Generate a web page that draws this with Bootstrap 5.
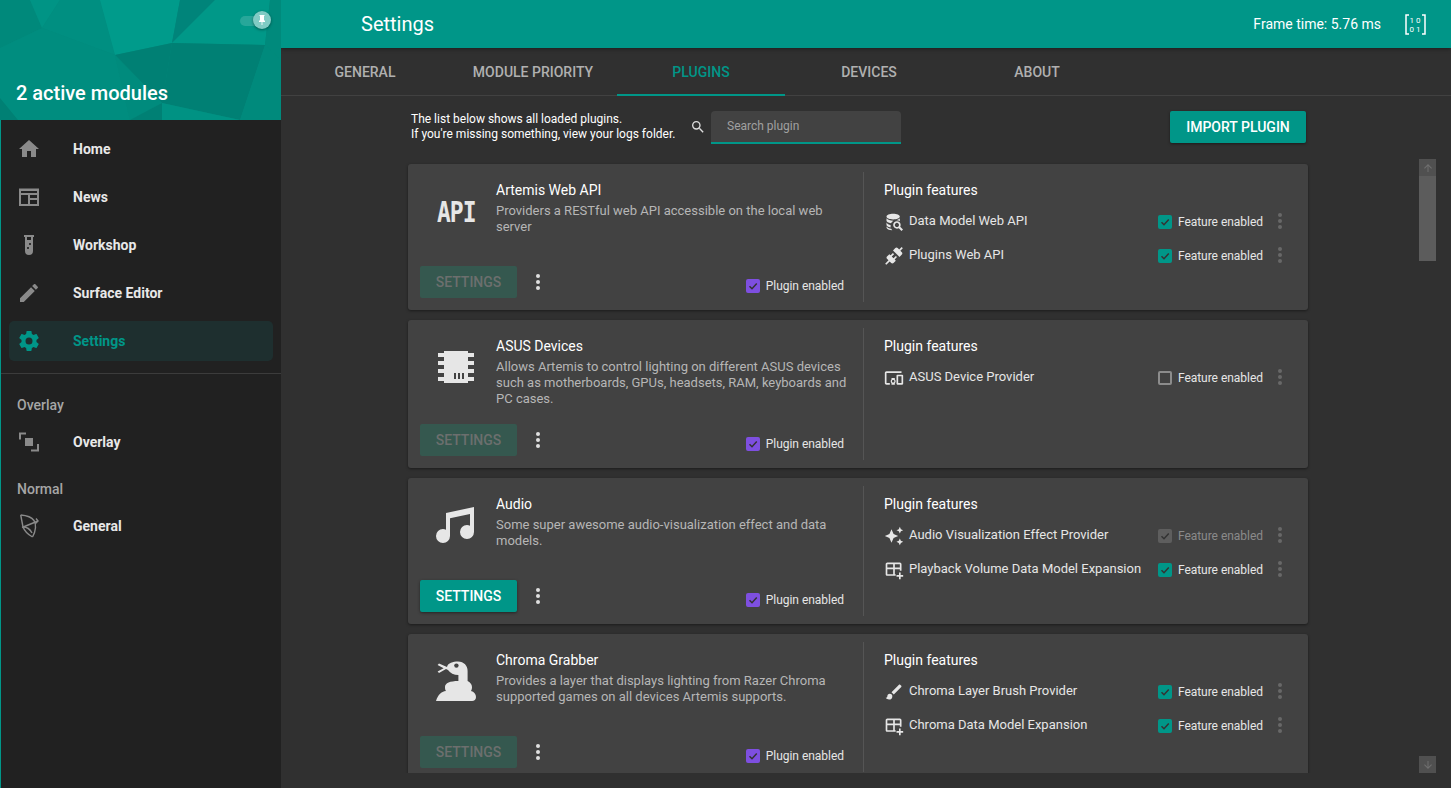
<!DOCTYPE html>
<html lang="en">
<head>
  <meta charset="UTF-8">
  <meta name="viewport" content="width=device-width, initial-scale=1.0">
  <title>Artemis Settings</title>
  <link href="https://cdn.jsdelivr.net/npm/bootstrap@5.3.3/dist/css/bootstrap.min.css" rel="stylesheet">
  <style>
    html, body { height: 100%; overflow: hidden; }
    body { background: #303030; color: #fff; font-family: Roboto, "Liberation Sans", sans-serif; font-size: 13px; }
    .app-shell { height: 788px; }
    .side { width: 281px; flex: none; background: #212121; border-left: 1px solid #009688; }
    .side-head { height: 120px; margin-left: -1px; width: 281px; }
    .side-head svg.poly { width: 100%; height: 100%; display: block; }
    .side-title { left: 16px; top: 80px; font-size: 20px; font-weight: 500; line-height: 26px; }
    .pin-track { left: 240px; top: 16px; width: 20px; height: 10px; border-radius: 5px; background: rgba(128,203,196,.3); }
    .pin-thumb { left: 253px; top: 11px; width: 18px; height: 18px; border-radius: 50%; background: #80cbc4; box-shadow: 0 1px 3px rgba(0,0,0,.4); }
    .pin-thumb svg { width: 12px; height: 12px; fill: #fff; }
    .side-nav { padding: 9px 8px 0; }
    .side-link { height: 40px; margin-bottom: 8px; padding: 0 8px; border-radius: 5px; color: #e8e8e8; font-weight: 700; font-size: 14px; }
    .side-link svg { width: 24px; height: 24px; fill: #8a8a8a; margin-right: 32px; flex: none; }
    .side-link.on { background: #1e2f2f; color: #009688; }
    .side-link.on svg { fill: #009688; }
    .side-rule { border-top: 1px solid #3c3c3c; margin-top: 4px; }
    .side-label { color: #a6a6a6; font-weight: 500; font-size: 14px; line-height: 20px; padding-left: 16px; margin-top: 21px; margin-bottom: 7px; }
    .side-label.next { margin-top: 17px; }
    .side-nav.low { padding-top: 0; }
    .main-col { min-width: 0; }
    .top-bar { height: 48px; background: #009688; box-shadow: 0 1px 4px rgba(0,0,0,.4); padding-left: 80px; padding-right: 25px; }
    .top-title { font-size: 20px; }
    .frame-time { font-size: 14px; margin-right: 24px; }
    .matrix { width: 21px; height: 21px; display: block; }
    .tab-bar { height: 48px; border-bottom: 1px solid #414141; }
    .tab-item { width: 168px; height: 48px; padding: 1px 0 0; color: #b0b0b0; font-size: 14px; font-weight: 500; }
    .tab-item:hover { color: #b0b0b0; }
    .tab-item.on { color: #009688; border-bottom: 2px solid #009688; padding-top: 3px; }
    .body-area { height: 677px; overflow: hidden; }
    .page-width { width: 900px; margin-left: 127px; }
    .tool-row { padding-top: 15px; height: 68px; }
    .tool-note { font-size: 12px; line-height: 15px; width: 282px; padding-left: 3px; padding-top: 1px; }
    .tool-glass { width: 16px; height: 16px; fill: #ddd; margin-right: 5px; margin-top: 8px; }
    .find-box { width: 190px; height: 33px; background: #424242; border: 0; border-bottom: 2px solid #009688; border-radius: 4px 4px 0 0; padding: 0 16px 2px; font-size: 12px; color: #fff; }
    .find-box::placeholder { color: #a0a0a0; opacity: 1; }
    .find-box:focus { background: #424242; color: #fff; box-shadow: none; border-color: #009688; }
    .btn-teal, .btn-teal:hover { background: #009688; color: #fff; border: 0; border-radius: 2px; font-size: 14px; font-weight: 500; height: 32px; padding: 0; box-shadow: 0 1px 3px rgba(0,0,0,.45); }
    .btn-teal.btn-import { width: 136px; margin-right: 2px; }
    .btn-teal.btn-cfg { width: 97px; }
    .btn-teal.btn-cfg:disabled { background: #35584f; color: #6c6f6e; opacity: 1; box-shadow: none; }
    .plug-card { background: #424242; border: 0; border-radius: 3px; margin-bottom: 10px; padding: 8px 0; box-shadow: 0 1px 3px rgba(0,0,0,.45); flex-direction: row; }
    .plug-left { width: 456px; flex: none; border-right: 1px solid #555; padding: 0 15px 4px 12px; }
    .plug-top { display: flex; min-height: 94px; padding-top: 8px; padding-bottom: 17px; }
    .plug-icon { width: 76px; flex: none; padding-top: 7px; padding-left: 12px; }
    .plug-icon svg { width: 48px; height: 48px; fill: #e6e6e6; display: block; }
    .api-mark { font-family: "DejaVu Sans Mono", monospace; font-weight: 700; font-size: 23px; line-height: 32px; letter-spacing: -1px; color: #e6e6e6; padding-left: 5px; padding-top: 9px; display: block; transform: scaleY(1.2); }
    .plug-name { font-size: 14px; line-height: 20px; margin-bottom: 3px; color: #fff; }
    .plug-desc { font-size: 13px; line-height: 16px; color: #b6b6b6; }
    .dots { width: 16px; height: 24px; fill: #e0e0e0; flex: none; }
    .dots.dim { fill: #686868; }
    .dots.lead { margin-left: 13px; }
    .check-line { font-size: 12px; line-height: 14px; color: #e6e6e6; letter-spacing: -.03px; }
    .check-line.off { color: #8a8a8a; }
    .plug-check { margin-right: 4px; margin-top: 7px; }
    .form-check-input.tick { width: 14px; height: 14px; margin: 0 6px 0 0; border-radius: 2px; background-color: transparent; border: 2px solid #8c8c8c; flex: none; opacity: 1; }
    .form-check-input.tick:checked { background-color: #009688; border-color: #009688; background-size: 12px; background-image: url("data:image/svg+xml,%3Csvg xmlns='http://www.w3.org/2000/svg' viewBox='0 0 24 24'%3E%3Cpath fill='none' stroke='%23333' stroke-width='3' d='M5 12.5l5 5L19.5 7'/%3E%3C/svg%3E"); }
    .form-check-input.tick.violet:checked { background-color: #7e4fe0; border-color: #7e4fe0; }
    .form-check-input.tick:disabled { opacity: 1; }
    .form-check-input.tick.greyed:checked { background-color: #5e5e5e; border-color: #5e5e5e; }
    .plug-right { padding: 8px 20px 0; min-width: 0; }
    .feat-head { font-size: 14px; line-height: 20px; margin-bottom: 4px; color: #fff; }
    .feat-row { height: 34px; }
    .feat-icon { width: 20px; height: 20px; fill: #e6e6e6; margin-right: 5px; flex: none; margin-top: 2px; }
    .feat-name { font-size: 13px; color: #e6e6e6; margin-top: -1px; }
    .feat-check { margin-top: 1px; }
    .feat-end { margin-left: 9px; margin-right: 0; }
    .scroll-rail { left: 1138px; top: 63px; width: 17px; height: 102px; background: #5c5c5c; }
    .scroll-cap { width: 17px; height: 17px; background: #505050; }
    .scroll-cap svg { width: 12px; height: 12px; fill: #6f6f6f; }
    .scroll-down { left: 1138px; top: 660px; }
  </style>
</head>
<body>

<svg width="0" height="0" class="position-absolute">
  <symbol id="i-home" viewBox="0 0 24 24"><path d="M10,20V14H14V20H19V12H22L12,3L2,12H5V20H10Z"/></symbol>
  <symbol id="i-news" viewBox="0 0 24 24"><path fill-rule="evenodd" d="M2 3l1 1 1-1 1 1 1-1 1 1 1-1 1 1 1-1 1 1 1-1 1 1 1-1 1 1 1-1 1 1 1-1 1 1 1-1 1 1 1-1V21H2ZM4 6V8H20V6ZM4 10V19H11V10ZM13 10V13H20V10ZM13 15V19H20V15Z"/></symbol>
  <symbol id="i-tube" viewBox="0 0 24 24"><path d="M7,2V4H8V18A4,4 0 0,0 12,22A4,4 0 0,0 16,18V4H17V2H7M11,16C10.4,16 10,15.6 10,15C10,14.4 10.4,14 11,14C11.6,14 12,14.4 12,15C12,15.6 11.6,16 11,16M13,12C12.4,12 12,11.6 12,11C12,10.4 12.4,10 13,10C13.6,10 14,10.4 14,11C14,11.6 13.6,12 13,12M14,7H10V4H14V7Z"/></symbol>
  <symbol id="i-pencil" viewBox="0 0 24 24"><path d="M20.71,7.04C21.1,6.65 21.1,6 20.71,5.63L18.37,3.29C18,2.9 17.35,2.9 16.96,3.29L15.12,5.12L18.87,8.87M3,17.25V21H6.75L17.81,9.93L14.06,6.18L3,17.25Z"/></symbol>
  <symbol id="i-cog" viewBox="0 0 24 24"><path d="M12,15.5A3.5,3.5 0 0,1 8.5,12A3.5,3.5 0 0,1 12,8.5A3.5,3.5 0 0,1 15.5,12A3.5,3.5 0 0,1 12,15.5M19.43,12.97C19.47,12.65 19.5,12.33 19.5,12C19.5,11.67 19.47,11.34 19.43,11L21.54,9.37C21.73,9.22 21.78,8.95 21.66,8.73L19.66,5.27C19.54,5.05 19.27,4.96 19.05,5.05L16.56,6.05C16.04,5.66 15.5,5.32 14.87,5.07L14.5,2.42C14.46,2.18 14.25,2 14,2H10C9.75,2 9.54,2.18 9.5,2.42L9.13,5.07C8.5,5.32 7.96,5.66 7.44,6.05L4.95,5.05C4.73,4.96 4.46,5.05 4.34,5.27L2.34,8.73C2.21,8.95 2.27,9.22 2.46,9.37L4.57,11C4.53,11.34 4.5,11.67 4.5,12C4.5,12.33 4.53,12.65 4.57,12.97L2.46,14.63C2.27,14.78 2.21,15.05 2.34,15.27L4.34,18.73C4.46,18.95 4.73,19.03 4.95,18.95L7.44,17.94C7.96,18.34 8.5,18.68 9.13,18.93L9.5,21.58C9.54,21.82 9.75,22 10,22H14C14.25,22 14.46,21.82 14.5,21.58L14.87,18.93C15.5,18.67 16.04,18.34 16.56,17.94L19.05,18.95C19.27,19.03 19.54,18.95 19.66,18.73L21.66,15.27C21.78,15.05 21.73,14.78 21.54,14.63L19.43,12.97Z"/></symbol>
  <symbol id="i-overlay" viewBox="0 0 24 24"><path d="M2 2.5H9V4.5H4V9.5H2ZM22 21.5H14V19.5H20V14H22ZM8 8H16V16H8Z"/></symbol>
  <symbol id="i-bow" viewBox="0 0 24 24"><g fill="none" stroke="#8a8a8a" stroke-width="1.4"><path d="M3.7 1C10 1.5 14.5 3 17 6.5C19.5 10 19 17 15.5 23"/><path d="M3.7 1L6 13C7.5 17 11 20.5 15.5 23"/><path d="M5 13.5L21 7"/><path d="M19 4.5L21 7L18.5 9.5"/><path d="M6 13C9 13 13 15 15 19"/></g></symbol>
  <symbol id="i-chip" viewBox="0 0 24 24"><path d="M6,4H18V5H21V7H18V9H21V11H18V13H21V15H18V17H21V19H18V20H6V19H3V17H6V15H3V13H6V11H3V9H6V7H3V5H6V4M11,15V18H12V15H11M13,15V18H14V15H13M15,15V18H16V15H15Z"/></symbol>
  <symbol id="i-music" viewBox="0 0 24 24"><path d="M21,3V15.5A3.5,3.5 0 0,1 17.5,19A3.5,3.5 0 0,1 14,15.5A3.5,3.5 0 0,1 17.5,12C18.04,12 18.55,12.12 19,12.34V6.47L9,8.6V17.5A3.5,3.5 0 0,1 5.5,21A3.5,3.5 0 0,1 2,17.5A3.5,3.5 0 0,1 5.5,14C6.04,14 6.55,14.12 7,14.34V6L21,3Z"/></symbol>
  <symbol id="i-snake" viewBox="0 0 24 24"><path d="M7.5 5C8 3 10.5 2.3 13 2.3C16 2.3 17.8 4.5 17.8 7V12C19 12.5 20 13.7 20 15C20 15.6 19.9 16.3 19.5 17C21 17.3 22 18.6 22 20C22 21.2 21.2 22 20 22H2C3 19 4.5 17.3 7 17C6.6 16.5 6.5 15.8 6.5 15C6.5 13 9 12 13.2 12V9C11 9 9 8 8 6.5L7 6L3.5 8L2.8 7.2L5.8 5.6L2.8 4L3.5 3.2Z"/><circle cx="12.2" cy="4.3" r="1.1" fill="#424242"/></symbol>
  <symbol id="i-db" viewBox="0 0 24 24"><path d="M18.68,12.32C16.92,10.56 14.07,10.56 12.32,12.32C10.56,14.08 10.56,16.93 12.32,18.68C13.79,20.15 16.03,20.42 17.71,19.5L21,22.79L22.79,21L19.5,17.71C20.42,16 20.15,13.79 18.68,12.32M17.27,17.27C16.29,18.25 14.71,18.25 13.73,17.27C12.75,16.29 12.75,14.71 13.73,13.73C14.71,12.75 16.29,12.75 17.27,13.73C18.25,14.71 18.25,16.29 17.27,17.27M11 2C6.6 2 3 3.5 3 5.5S6.6 9 11 9 19 7.5 19 5.5 15.4 2 11 2M3 7.5V10.5C3 11.8 5.2 13 8.4 13.5C9 12.2 10 11.2 11.2 10.4C7.4 10.4 4.4 9.2 3 7.5M19 7.5C18 8.7 16.2 9.6 14 10.1C16 9.9 17.8 10.2 19 11ZM3 12.5V15.5C3 16.9 5 18 8 18.5C7.9 17.5 7.8 16.6 8 15.6C5.8 15.2 4 14.1 3 12.5M3 17.5V18.5C3 20.3 6 21.8 10 22C9.4 21.4 8.9 20.8 8.6 20.2C6.2 19.8 4.2 18.9 3 17.5Z"/></symbol>
  <symbol id="i-plug" viewBox="0 0 24 24"><path d="M21.4 7.5C22.2 8.3 22.2 9.6 21.4 10.3L18.6 13.1L10.8 5.3L13.6 2.5C14.4 1.7 15.7 1.7 16.4 2.5L18.2 4.3L21.2 1.3L22.6 2.7L19.6 5.7L21.4 7.5M15.6 13.3L14.2 11.9L11.4 14.7L9.3 12.6L12.1 9.8L10.7 8.4L7.9 11.2L6.4 9.8L3.6 12.6C2.8 13.4 2.8 14.7 3.6 15.4L5.4 17.2L1.4 21.2L2.8 22.6L6.8 18.6L8.6 20.4C9.4 21.2 10.7 21.2 11.4 20.4L14.2 17.6L12.8 16.2L15.6 13.3Z"/></symbol>
  <symbol id="i-devices" viewBox="0 0 24 24"><path d="M3 6H21V4H3C1.9 4 1 4.9 1 6V18C1 19.1 1.9 20 3 20H7V18H3V6M13 12H9V13.78C8.39 14.33 8 15.11 8 16C8 16.89 8.39 17.67 9 18.22V20H13V18.22C13.61 17.67 14 16.88 14 16S13.61 14.33 13 13.78V12M11 17.5C10.17 17.5 9.5 16.83 9.5 16S10.17 14.5 11 14.5 12.5 15.17 12.5 16 11.83 17.5 11 17.5M22 8H16C15.5 8 15 8.5 15 9V19C15 19.5 15.5 20 16 20H22C22.5 20 23 19.5 23 19V9C23 8.5 22.5 8 22 8M21 18H17V10H21V18Z"/></symbol>
  <symbol id="i-spark" viewBox="0 0 24 24"><path d="M19,1L17.74,3.75L15,5L17.74,6.26L19,9L20.25,6.26L23,5L20.25,3.75M9,4L6.5,9.5L1,12L6.5,14.5L9,20L11.5,14.5L17,12L11.5,9.5M19,15L17.74,17.74L15,19L17.74,20.25L19,23L20.25,20.25L23,19L20.25,17.74"/></symbol>
  <symbol id="i-table" viewBox="0 0 24 24"><path fill-rule="evenodd" d="M4 3H19C20.1 3 21 3.9 21 5V13H19V11H13V17H14V19H4C2.9 19 2 18.1 2 17V5C2 3.9 2.9 3 4 3ZM4 5V9H11V5ZM13 5V9H19V5ZM4 11V17H11V11ZM18 15H20V18H23V20H20V23H18V20H15V18H18Z"/></symbol>
  <symbol id="i-brush" viewBox="0 0 24 24"><path d="M20.71,4.63L19.37,3.29C19,2.9 18.35,2.9 17.96,3.29L9,12.25L11.75,15L20.71,6.04C21.1,5.65 21.1,5 20.71,4.63M7,14A3,3 0 0,0 4,17C4,18.31 2.84,19 2,19C2.92,20.22 4.5,21 6,21A4,4 0 0,0 10,17A3,3 0 0,0 7,14Z"/></symbol>
  <symbol id="i-dots" viewBox="0 0 16 24"><circle cx="8" cy="6" r="2"/><circle cx="8" cy="12" r="2"/><circle cx="8" cy="18" r="2"/></symbol>
</svg>

<div class="app-shell d-flex">
  <aside class="side d-flex flex-column">
    <div class="side-head position-relative">
      <svg class="poly" viewBox="0 0 281 120" preserveAspectRatio="none">
        <rect width="281" height="120" fill="#008b7d"/>
        <polygon points="0,0 30,0 42,28 0,48" fill="#00897b"/>
        <polygon points="30,0 60,0 42,28" fill="#009485"/>
        <polygon points="60,0 100,0 115,55 42,28" fill="#008f81"/>
        <polygon points="100,0 180,0 172,43 115,55" fill="#009b8b"/>
        <polygon points="180,0 215,0 172,43" fill="#00847a"/>
        <polygon points="215,0 270,0 265,45 172,43" fill="#009888"/>
        <polygon points="270,0 281,0 281,60 265,45" fill="#008a7c"/>
        <polygon points="172,43 265,45 240,120 162,103" fill="#008074"/>
        <polygon points="115,55 172,43 162,103" fill="#008074"/>
        <polygon points="162,103 240,120 162,120" fill="#009283"/>
        <polygon points="265,45 281,60 281,120 240,120" fill="#008a7c"/>
        <polygon points="0,48 42,28 115,55 130,120 0,120" fill="#008d7f"/>
        <polygon points="115,55 162,103 130,120" fill="#008b7d"/>
        <polygon points="130,120 162,103 162,120" fill="#008074"/>
        <polygon points="0,98 18,120 0,120" fill="#008074"/>
      </svg>
      <div class="pin-track position-absolute"></div>
      <div class="pin-thumb position-absolute d-flex align-items-center justify-content-center">
        <svg viewBox="0 0 24 24"><path d="M16,12V4H17V2H7V4H8V12L6,14V16H11.2V22H12.8V16H18V14L16,12Z"/></svg>
      </div>
      <div class="side-title position-absolute">2 active modules</div>
    </div>
    <nav class="nav flex-column side-nav">
      <a class="nav-link side-link d-flex align-items-center" href="#"><svg><use href="#i-home"/></svg>Home</a>
      <a class="nav-link side-link d-flex align-items-center" href="#"><svg><use href="#i-news"/></svg>News</a>
      <a class="nav-link side-link d-flex align-items-center" href="#"><svg><use href="#i-tube"/></svg>Workshop</a>
      <a class="nav-link side-link d-flex align-items-center" href="#"><svg><use href="#i-pencil"/></svg>Surface Editor</a>
      <a class="nav-link side-link on d-flex align-items-center" href="#"><svg><use href="#i-cog"/></svg>Settings</a>
    </nav>
    <div class="side-rule"></div>
    <div class="side-label">Overlay</div>
    <nav class="nav flex-column side-nav low">
      <a class="nav-link side-link d-flex align-items-center mb-0" href="#"><svg><use href="#i-overlay"/></svg>Overlay</a>
    </nav>
    <div class="side-label next">Normal</div>
    <nav class="nav flex-column side-nav low">
      <a class="nav-link side-link d-flex align-items-center mb-0" href="#"><svg><use href="#i-bow"/></svg>General</a>
    </nav>
  </aside>

  <div class="main-col flex-grow-1 d-flex flex-column">
    <header class="top-bar d-flex align-items-center">
      <div class="top-title">Settings</div>
      <div class="frame-time ms-auto">Frame time: 5.76 ms</div>
      <svg class="matrix" viewBox="0 0 21 21">
        <path fill="none" stroke="#fff" stroke-width="1.5" d="M4 1H1V20H4M17 1H20V20H17"/>
        <text x="11" y="9" text-anchor="middle" fill="#fff" font-family="Roboto" font-size="8" letter-spacing="2">10</text>
        <text x="11" y="17.5" text-anchor="middle" fill="#fff" font-family="Roboto" font-size="8" letter-spacing="2">01</text>
      </svg>
    </header>

    <nav class="nav tab-bar">
      <a class="nav-link tab-item d-flex align-items-center justify-content-center" href="#">GENERAL</a>
      <a class="nav-link tab-item d-flex align-items-center justify-content-center" href="#">MODULE PRIORITY</a>
      <a class="nav-link tab-item on d-flex align-items-center justify-content-center" href="#">PLUGINS</a>
      <a class="nav-link tab-item d-flex align-items-center justify-content-center" href="#">DEVICES</a>
      <a class="nav-link tab-item d-flex align-items-center justify-content-center" href="#">ABOUT</a>
    </nav>

    <div class="body-area position-relative">
      <div class="page-width">
        <div class="tool-row d-flex align-items-start">
          <div class="tool-note">The list below shows all loaded plugins.<br>If you're missing something, view your logs folder.</div>
          <svg class="tool-glass" viewBox="0 0 24 24"><path d="M9.5,3A6.5,6.5 0 0,1 16,9.5C16,11.11 15.41,12.59 14.44,13.73L14.71,14H15.5L20.5,19L19,20.5L14,15.5V14.71L13.73,14.44C12.59,15.41 11.11,16 9.5,16A6.5,6.5 0 0,1 3,9.5A6.5,6.5 0 0,1 9.5,3M9.5,5C7,5 5,7 5,9.5C5,12 7,14 9.5,14C12,14 14,12 14,9.5C14,7 12,5 9.5,5Z"/></svg>
          <input class="form-control find-box" type="text" placeholder="Search plugin">
          <button class="btn btn-teal btn-import ms-auto">IMPORT PLUGIN</button>
        </div>

        <div class="card plug-card">
          <div class="plug-left">
            <div class="plug-top">
              <div class="plug-icon"><span class="api-mark">API</span></div>
              <div>
                <div class="plug-name">Artemis Web API</div>
                <div class="plug-desc">Providers a RESTful web API accessible on the local web server</div>
              </div>
            </div>
            <div class="d-flex align-items-center">
              <button class="btn btn-teal btn-cfg" disabled>SETTINGS</button>
              <svg class="dots lead"><use href="#i-dots"/></svg>
              <label class="check-line plug-check d-flex align-items-center ms-auto"><input class="form-check-input tick violet" type="checkbox" checked>Plugin enabled</label>
            </div>
          </div>
          <div class="plug-right flex-grow-1">
            <div class="feat-head">Plugin features</div>
            <div class="feat-row d-flex align-items-center"><svg class="feat-icon"><use href="#i-db"/></svg><span class="feat-name">Data Model Web API</span>
              <label class="check-line feat-check d-flex align-items-center ms-auto"><input class="form-check-input tick" type="checkbox" checked>Feature enabled</label><svg class="dots dim feat-end"><use href="#i-dots"/></svg></div>
            <div class="feat-row d-flex align-items-center"><svg class="feat-icon"><use href="#i-plug"/></svg><span class="feat-name">Plugins Web API</span>
              <label class="check-line feat-check d-flex align-items-center ms-auto"><input class="form-check-input tick" type="checkbox" checked>Feature enabled</label><svg class="dots dim feat-end"><use href="#i-dots"/></svg></div>
          </div>
        </div>

        <div class="card plug-card">
          <div class="plug-left">
            <div class="plug-top">
              <div class="plug-icon"><svg><use href="#i-chip"/></svg></div>
              <div>
                <div class="plug-name">ASUS Devices</div>
                <div class="plug-desc">Allows Artemis to control lighting on different ASUS devices such as motherboards, GPUs, headsets, RAM, keyboards and PC cases.</div>
              </div>
            </div>
            <div class="d-flex align-items-center">
              <button class="btn btn-teal btn-cfg" disabled>SETTINGS</button>
              <svg class="dots lead"><use href="#i-dots"/></svg>
              <label class="check-line plug-check d-flex align-items-center ms-auto"><input class="form-check-input tick violet" type="checkbox" checked>Plugin enabled</label>
            </div>
          </div>
          <div class="plug-right flex-grow-1">
            <div class="feat-head">Plugin features</div>
            <div class="feat-row d-flex align-items-center"><svg class="feat-icon"><use href="#i-devices"/></svg><span class="feat-name">ASUS Device Provider</span>
              <label class="check-line feat-check d-flex align-items-center ms-auto"><input class="form-check-input tick" type="checkbox">Feature enabled</label><svg class="dots dim feat-end"><use href="#i-dots"/></svg></div>
          </div>
        </div>

        <div class="card plug-card">
          <div class="plug-left">
            <div class="plug-top">
              <div class="plug-icon"><svg><use href="#i-music"/></svg></div>
              <div>
                <div class="plug-name">Audio</div>
                <div class="plug-desc">Some super awesome audio-visualization effect and data models.</div>
              </div>
            </div>
            <div class="d-flex align-items-center">
              <button class="btn btn-teal btn-cfg">SETTINGS</button>
              <svg class="dots lead"><use href="#i-dots"/></svg>
              <label class="check-line plug-check d-flex align-items-center ms-auto"><input class="form-check-input tick violet" type="checkbox" checked>Plugin enabled</label>
            </div>
          </div>
          <div class="plug-right flex-grow-1">
            <div class="feat-head">Plugin features</div>
            <div class="feat-row d-flex align-items-center"><svg class="feat-icon"><use href="#i-spark"/></svg><span class="feat-name">Audio Visualization Effect Provider</span>
              <label class="check-line off feat-check d-flex align-items-center ms-auto"><input class="form-check-input tick greyed" type="checkbox" checked disabled>Feature enabled</label><svg class="dots dim feat-end"><use href="#i-dots"/></svg></div>
            <div class="feat-row d-flex align-items-center"><svg class="feat-icon"><use href="#i-table"/></svg><span class="feat-name">Playback Volume Data Model Expansion</span>
              <label class="check-line feat-check d-flex align-items-center ms-auto"><input class="form-check-input tick" type="checkbox" checked>Feature enabled</label><svg class="dots dim feat-end"><use href="#i-dots"/></svg></div>
          </div>
        </div>

        <div class="card plug-card">
          <div class="plug-left">
            <div class="plug-top">
              <div class="plug-icon"><svg><use href="#i-snake"/></svg></div>
              <div>
                <div class="plug-name">Chroma Grabber</div>
                <div class="plug-desc">Provides a layer that displays lighting from Razer Chroma supported games on all devices Artemis supports.</div>
              </div>
            </div>
            <div class="d-flex align-items-center">
              <button class="btn btn-teal btn-cfg" disabled>SETTINGS</button>
              <svg class="dots lead"><use href="#i-dots"/></svg>
              <label class="check-line plug-check d-flex align-items-center ms-auto"><input class="form-check-input tick violet" type="checkbox" checked>Plugin enabled</label>
            </div>
          </div>
          <div class="plug-right flex-grow-1">
            <div class="feat-head">Plugin features</div>
            <div class="feat-row d-flex align-items-center"><svg class="feat-icon"><use href="#i-brush"/></svg><span class="feat-name">Chroma Layer Brush Provider</span>
              <label class="check-line feat-check d-flex align-items-center ms-auto"><input class="form-check-input tick" type="checkbox" checked>Feature enabled</label><svg class="dots dim feat-end"><use href="#i-dots"/></svg></div>
            <div class="feat-row d-flex align-items-center"><svg class="feat-icon"><use href="#i-table"/></svg><span class="feat-name">Chroma Data Model Expansion</span>
              <label class="check-line feat-check d-flex align-items-center ms-auto"><input class="form-check-input tick" type="checkbox" checked>Feature enabled</label><svg class="dots dim feat-end"><use href="#i-dots"/></svg></div>
          </div>
        </div>
      </div>

      <div class="scroll-rail position-absolute">
        <div class="scroll-cap d-flex align-items-center justify-content-center"><svg viewBox="0 0 24 24"><path d="M13,20H11V8L5.5,13.5L4.08,12.08L12,4.16L19.92,12.08L18.5,13.5L13,8V20Z"/></svg></div>
      </div>
      <div class="scroll-cap scroll-down position-absolute d-flex align-items-center justify-content-center"><svg viewBox="0 0 24 24"><path d="M11,4H13V16L18.5,10.5L19.92,11.92L12,19.84L4.08,11.92L5.5,10.5L11,16V4Z"/></svg></div>
    </div>
  </div>
</div>

<script src="https://cdn.jsdelivr.net/npm/bootstrap@5.3.3/dist/js/bootstrap.bundle.min.js"></script>
</body>
</html>
